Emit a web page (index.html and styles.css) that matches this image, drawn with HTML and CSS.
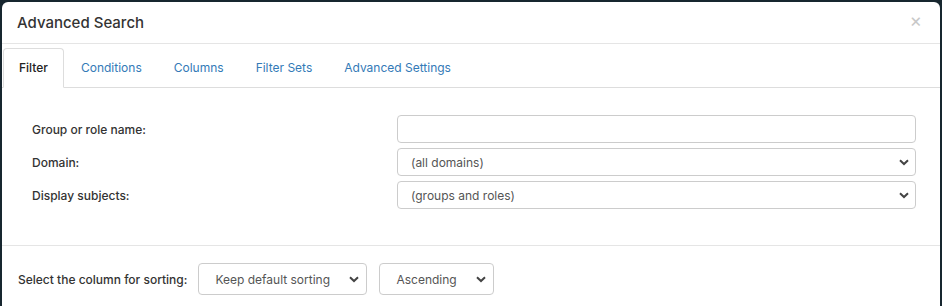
FILE: index.html
```html
<!DOCTYPE html>
<html lang="en">
<head>
    <meta charset="UTF-8">
    <title>Advanced Search</title>
    <link rel="stylesheet" href="styles.css">
</head>
<body>
    <div class="modal">
        <div class="modal-header">
            <h4 class="modal-title">Advanced Search</h4>
            <span class="close">&times;</span>
        </div>

        <!-- tabs -->
        <ul class="nav-tabs">
            <li class="active"><a>Filter</a></li>
            <li><a>Conditions</a></li>
            <li><a>Columns</a></li>
            <li><a>Filter Sets</a></li>
            <li><a>Advanced Settings</a></li>
        </ul>

        <div class="tab-content">
            <div class="form-row">
                <label>Group or role name:</label>
                <input type="text" class="form-control">
            </div>
            <div class="form-row">
                <label>Domain:</label>
                <select class="form-control">
                    <option>(all domains)</option>
                </select>
            </div>
            <div class="form-row">
                <label>Display subjects:</label>
                <select class="form-control">
                    <option>(groups and roles)</option>
                </select>
            </div>
        </div>

        <div class="sort-bar">
            <label>Select the column for sorting:</label>
            <select class="form-control sort-column">
                <option>Keep default sorting</option>
            </select>
            <select class="form-control sort-order">
                <option>Ascending</option>
            </select>
        </div>
    </div>
</body>
</html>
```

FILE: styles.css
```css
body {
    margin: 0;
    padding: 2px 2px 0;
    background-color: #17262f;
    font-family: Inter, "Liberation Sans", Arial, sans-serif;
    font-size: 12px;
    color: #333;
}
.modal {
    background-color: #fff;
    border-radius: 6px 6px 0 0;
    height: 304px;
}
.modal-header {
    display: flex;
    justify-content: space-between;
    align-items: center;
    height: 41px;
    padding: 0 18px 0 15px;
    border-bottom: 1px solid #e5e5e5;
}
.modal-title {
    margin: 0;
    font-size: 15px;
    font-weight: 500;
    color: #333;
}
.close {
    color: #c8c8c8;
    font-size: 19px;
    line-height: 1;
    margin-top: -4px;
}
.nav-tabs {
    display: flex;
    list-style: none;
    margin: 4px 0 0;
    padding: 0 0 0 1px;
    border-bottom: 1px solid #ddd;
}
.nav-tabs li {
    margin-right: 2px;
    margin-bottom: -1px;
}
.nav-tabs a {
    display: block;
    padding: 0 14px;
    line-height: 38px;
    border: 1px solid transparent;
    border-radius: 4px 4px 0 0;
    color: #337ab7;
}
.nav-tabs li.active a {
    padding: 0 15px;
    color: #222;
    font-weight: 500;
    background-color: #fff;
    border-color: #ddd;
    border-bottom-color: transparent;
}
.tab-content {
    display: flex;
    flex-direction: column;
    gap: 5px;
    padding: 27px 24px 36px 30px;
    border-bottom: 1px solid #e5e5e5;
}
.form-row {
    display: grid;
    grid-template-columns: 365px 1fr;
    align-items: center;
}
.form-row label {
    font-weight: 500;
}
.form-control {
    box-sizing: border-box;
    height: 28px;
    padding: 0 13px;
    border: 1px solid #ccc;
    border-radius: 4px;
    background-color: #fff;
    font-family: inherit;
    font-size: 12px;
    color: #555;
}
select.form-control {
    appearance: none;
    background-image: url("data:image/svg+xml,%3Csvg xmlns='http://www.w3.org/2000/svg' width='10' height='7'%3E%3Cpath d='M1 1.2l4 3.8 4-3.8' fill='none' stroke='%23444' stroke-width='2'/%3E%3C/svg%3E");
    background-repeat: no-repeat;
    background-position: right 6px center;
}
.sort-bar {
    display: flex;
    align-items: center;
    padding: 17px 15px 17px 16px;
}
.sort-bar label {
    margin-right: 11px;
    font-weight: 500;
}
.sort-bar .form-control {
    height: 32px;
    padding: 0 16px;
    background-position: right 7px center;
}
.sort-column {
    width: 169px;
    margin-right: 12px;
}
.sort-order {
    width: 115px;
}
```
